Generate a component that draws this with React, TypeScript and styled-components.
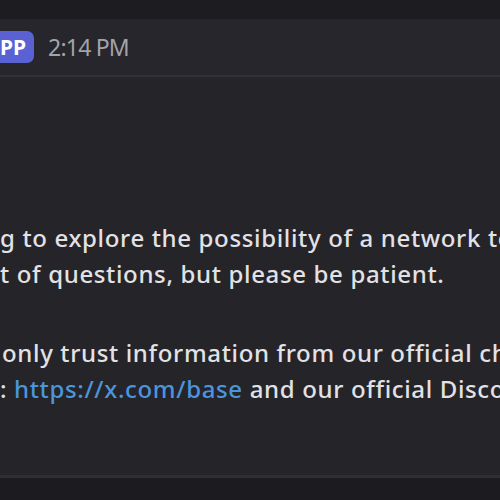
import React from "react";
import styled, { createGlobalStyle } from "styled-components";

const Global = createGlobalStyle`
  html, body { margin: 0; padding: 0; background: #252429; }
  #root { width: 500px; height: 500px; overflow: hidden; }
`;

const Frame = styled.div`
  width: 500px;
  height: 500px;
  display: flex;
  flex-direction: column;
  background: #252429;
  font-family: "Noto Sans", "Open Sans", sans-serif;
  overflow: hidden;
`;

const TopStrip = styled.div`
  height: 19px;
  flex: none;
  background: #1d1c21;
`;

const HeaderRow = styled.div`
  height: 56px;
  flex: none;
  display: flex;
  align-items: center;
  gap: 14px;
  background: #27262c;
  border-bottom: 2px solid #323137;
`;

const Badge = styled.span`
  height: 32px;
  display: flex;
  align-items: center;
  padding: 0 8px 0 0;
  background: #5a62d3;
  border-radius: 0 7px 7px 0;
  color: #ffffff;
  font-weight: 700;
  font-size: 21px;
`;

const Time = styled.span`
  color: #a3a3aa;
  font-size: 23px;
  letter-spacing: -0.8px;
`;

const Body = styled.div`
  flex: 1;
  padding-top: 143px;
  display: flex;
  flex-direction: column;
  gap: 43px;
`;

const Paragraph = styled.div`
  display: flex;
  flex-direction: column;
`;

const Line = styled.div<{ $indent?: number }>`
  height: 36px;
  line-height: 36px;
  font-size: 24px;
  font-weight: 500;
  letter-spacing: 0.65px;
  color: #e2e2e6;
  white-space: nowrap;
  overflow: hidden;
  padding-left: ${(p) => p.$indent ?? 0}px;
`;

const Link = styled.span`
  color: #4b95dc;
`;

const BottomBar = styled.div`
  height: 22px;
  flex: none;
  background: #1c1b20;
  border-top: 3px solid #2f2e34;
`;

export default function App() {
  return (
    <Frame>
      <Global />
      <TopStrip />
      <HeaderRow>
        <Badge>PP</Badge>
        <Time>2:14 PM</Time>
      </HeaderRow>
      <Body>
        <Paragraph>
          <Line>g to explore the possibility of a network to</Line>
          <Line>t of questions, but please be patient.</Line>
        </Paragraph>
        <Paragraph>
          <Line $indent={2}>only trust information from our official channels</Line>
          <Line>
            : <Link>https://x.com/base</Link> and our official Discord
          </Line>
        </Paragraph>
      </Body>
      <BottomBar />
    </Frame>
  );
}
